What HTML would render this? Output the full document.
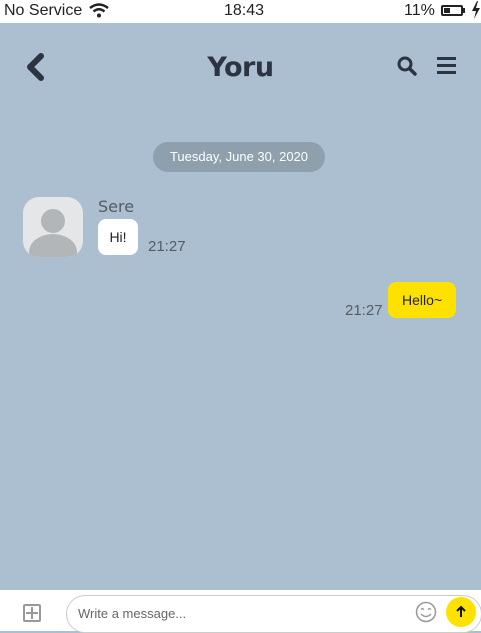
<!DOCTYPE html>
<html><head><style>
*{margin:0;padding:0;box-sizing:border-box}
body{width:481px;height:631px;overflow:hidden;font-family:"Liberation Sans","DejaVu Sans",sans-serif;background:#abbfd0;position:relative}
.abs{position:absolute}
</style></head><body>
<div class="abs" style="left:0;top:0;width:481px;height:23px;background:#fff"></div>
<div class="abs" style="left:4px;top:2px;font-size:16px;color:#222">No Service</div>
<svg class="abs" style="left:88px;top:3px" width="22" height="15" viewBox="0 0 22 15"><path d="M2 5 Q11 -2 20 5" stroke="#222" stroke-width="2.5" fill="none"/><path d="M5.5 8.5 Q11 4 16.5 8.5" stroke="#222" stroke-width="2.5" fill="none"/><circle cx="11" cy="12.5" r="2" fill="#222"/></svg>
<div class="abs" style="left:224px;top:2px;font-size:16px;color:#222">18:43</div>
<div class="abs" style="left:404px;top:2px;font-size:16px;color:#222">11%</div>
<div class="abs" style="left:441px;top:5px;width:22px;height:11px;border:2px solid #222;border-radius:2px"><div style="width:6px;height:5px;background:#222;margin:1px"></div></div>
<div class="abs" style="left:463px;top:8px;width:2px;height:5px;background:#222"></div>
<svg class="abs" style="left:471px;top:1px" width="10" height="18" viewBox="0 0 10 18"><path d="M6 0 L1 10 L5 10 L3 18 L9 7 L5 7 L7 0Z" fill="#222"/></svg>
<svg class="abs" style="left:24px;top:52px" width="22" height="30" viewBox="0 0 22 30"><path d="M17 4 L6 15 L17 26" stroke="#2b3440" stroke-width="6" fill="none" stroke-linecap="round" stroke-linejoin="round"/></svg>
<div class="abs" style="left:0;width:481px;top:52px;text-align:center;font-size:27px;font-weight:bold;color:#2b3440;font-family:'DejaVu Sans',sans-serif;letter-spacing:-0.5px">Yoru</div>
<svg class="abs" style="left:396px;top:55px" width="22" height="22" viewBox="0 0 22 22"><circle cx="9" cy="9" r="6" stroke="#2b3440" stroke-width="3" fill="none"/><path d="M13.5 13.5 L19 19" stroke="#2b3440" stroke-width="3.5" stroke-linecap="round"/></svg>
<div class="abs" style="left:437px;top:57px;width:19px;height:3px;background:#2b3440;box-shadow:0 7px 0 #2b3440,0 14px 0 #2b3440"></div>
<div class="abs" style="left:153px;top:142px;width:172px;height:30px;border-radius:15px;background:#8e9fae;color:#fff;font-size:13px;text-align:center;line-height:30px">Tuesday, June 30, 2020</div>
<div class="abs" style="left:23px;top:197px;width:60px;height:60px;border-radius:16px;background:#e4e6e8;overflow:hidden">
<div style="position:absolute;left:18px;top:12px;width:24px;height:24px;border-radius:50%;background:#b3b6b8"></div>
<div style="position:absolute;left:6px;top:37px;width:48px;height:36px;border-radius:50%;background:#b3b6b8"></div></div>
<div class="abs" style="left:98px;top:197px;font-size:16px;color:#555c64;font-family:'DejaVu Sans',sans-serif">Sere</div>
<div class="abs" style="left:98px;top:219px;width:40px;height:36px;border-radius:8px;background:#fff;font-size:14px;color:#222;text-align:center;line-height:36px">Hi!</div>
<div class="abs" style="left:148px;top:238px;font-size:15px;color:#555c64">21:27</div>
<div class="abs" style="left:345px;top:302px;font-size:15px;color:#555c64">21:27</div>
<div class="abs" style="left:388px;top:282px;width:68px;height:36px;border-radius:8px;background:#ffe100;font-size:14px;color:#222;text-align:center;line-height:36px">Hello~</div>
<div class="abs" style="left:0;top:590px;width:481px;height:41px;background:#fff"></div>
<div class="abs" style="left:23px;top:604px;width:18px;height:18px;border:2px solid #999;border-radius:2px"></div>
<div class="abs" style="left:31px;top:607px;width:2px;height:12px;background:#999"></div>
<div class="abs" style="left:26px;top:612px;width:12px;height:2px;background:#999"></div>
<div class="abs" style="left:66px;top:595px;width:416px;height:38px;border:1px solid #ccc;border-radius:19px;background:#fff"></div>
<div class="abs" style="left:78px;top:606px;font-size:13px;color:#666">Write a message...</div>
<svg class="abs" style="left:415px;top:601px" width="22" height="22" viewBox="0 0 22 22"><circle cx="11" cy="11" r="9.5" stroke="#999" stroke-width="1.5" fill="none"/><path d="M6 8.5 Q7.5 7 9 8.5 M13 8.5 Q14.5 7 16 8.5" stroke="#999" stroke-width="1.3" fill="none"/><path d="M6 13 Q11 18 16 13" stroke="#999" stroke-width="1.5" fill="none"/></svg>
<div class="abs" style="left:446px;top:597px;width:30px;height:30px;border-radius:50%;background:#ffe100"></div>
<svg class="abs" style="left:454px;top:605px" width="14" height="14" viewBox="0 0 14 14"><path d="M7 12 V2 M3 6 L7 2 L11 6" stroke="#111" stroke-width="2" fill="none"/></svg>
</body></html>
